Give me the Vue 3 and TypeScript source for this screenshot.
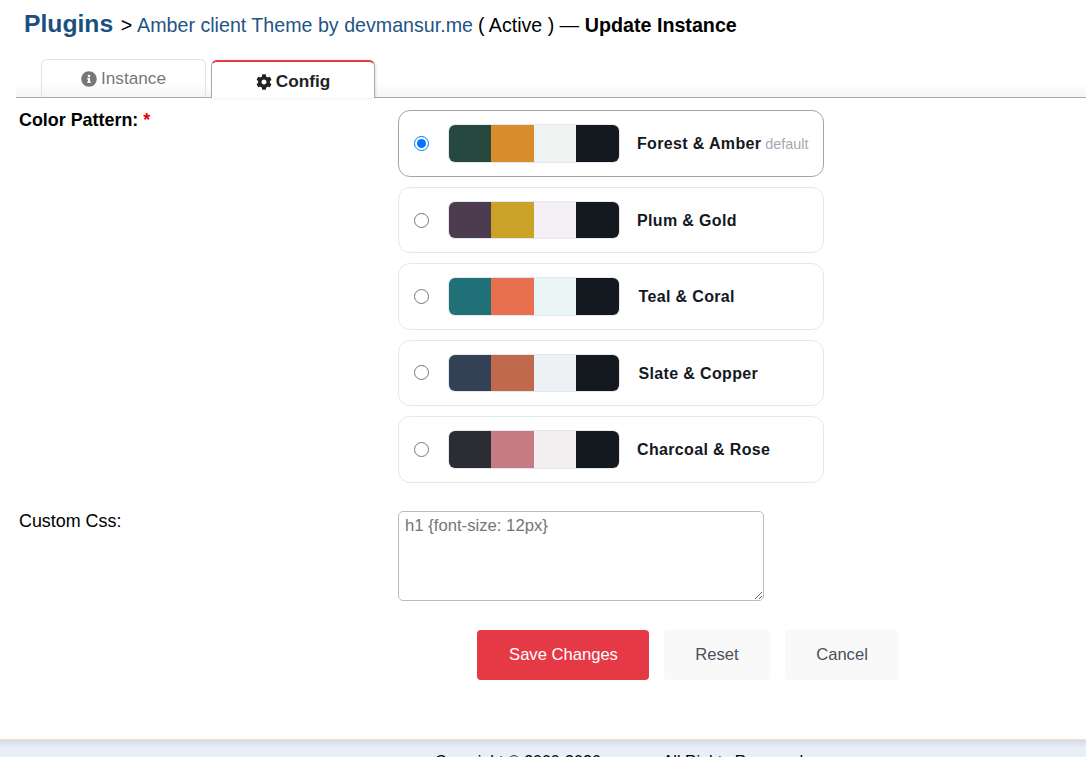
<script setup lang="ts">
interface Pattern {
  name: string
  colors: string[]
  isDefault?: boolean
  gap: number
}
const patterns: Pattern[] = [
  { name: 'Forest & Amber', colors: ['#26483e', '#d98c2b', '#eef3f1', '#14181f'], isDefault: true, gap: 17 },
  { name: 'Plum & Gold', colors: ['#4d3b50', '#c9a227', '#f3eff5', '#14181f'], gap: 17 },
  { name: 'Teal & Coral', colors: ['#1f7077', '#e8704f', '#e9f5f4', '#14181f'], gap: 18.5 },
  { name: 'Slate & Copper', colors: ['#334155', '#c0694c', '#eef1f4', '#14181f'], gap: 18.5 },
  { name: 'Charcoal & Rose', colors: ['#2c2c33', '#c67b84', '#f3eeef', '#14181f'], gap: 17 },
]
</script>

<template>
  <div class="page">
    <h1 class="title">
      <span class="plugins">Plugins</span>
      <span class="sep">&gt;</span>
      <span class="plugin-name">Amber client Theme by devmansur.me</span>
      <span class="state">( Active ) —</span>
      <strong class="action">Update Instance</strong>
    </h1>

    <div class="tabs">
      <a class="tab">
        <svg class="ico" viewBox="0 0 512 512"><path fill="currentColor" d="M256 8C119 8 8 119 8 256s111 248 248 248 248-111 248-248S393 8 256 8zm0 110c23 0 42 19 42 42s-19 42-42 42-42-19-42-42 19-42 42-42zm56 254c0 7-5 12-12 12h-88c-7 0-12-5-12-12v-24c0-7 5-12 12-12h12v-64h-12c-7 0-12-5-12-12v-24c0-7 5-12 12-12h64c7 0 12 5 12 12v100h12c7 0 12 5 12 12v24z"/></svg>
        Instance
      </a>
      <a class="tab active">
        <svg class="ico" viewBox="0 0 512 512"><path fill="currentColor" d="M487 316l-42-25c4-23 4-47 0-70l42-25c5-3 7-9 5-14-11-35-30-67-54-93-4-4-10-5-15-2l-42 25c-18-15-38-27-60-35V27c0-6-4-11-9-12-37-8-74-8-110 0-5 1-9 6-9 12v49c-22 8-42 20-60 35L91 86c-5-3-11-2-15 2-24 26-43 58-54 93-2 5 0 11 5 14l42 25c-4 23-4 47 0 70l-42 25c-5 3-7 9-5 14 11 35 30 67 54 93 4 4 10 5 15 2l42-25c18 15 38 27 60 35v49c0 6 4 11 9 12 37 8 74 8 110 0 5-1 9-6 9-12v-49c22-8 42-20 60-35l42 25c5 3 11 2 15-2 24-26 43-58 54-93 2-5 0-11-5-14zM256 336c-44 0-80-36-80-80s36-80 80-80 80 36 80 80-36 80-80 80z"/></svg>
        Config
      </a>
    </div>

    <form class="form" @submit.prevent>
      <div class="row">
        <label class="label strong">Color Pattern: <span class="req">*</span></label>
        <div class="options">
          <label v-for="(p, i) in patterns" :key="p.name" class="option" :class="{ selected: i === 0 }">
            <input type="radio" name="pattern" class="radio" :checked="i === 0" />
            <span class="swatch">
              <span v-for="c in p.colors" :key="c" class="chip" :style="{ background: c }"></span>
            </span>
            <span class="name" :style="{ marginLeft: p.gap + 'px' }">{{ p.name }}</span>
            <small v-if="p.isDefault" class="default">default</small>
          </label>
        </div>
      </div>

      <div class="row css-row">
        <label class="label">Custom Css:</label>
        <textarea class="css" placeholder="h1 {font-size: 12px}"></textarea>
      </div>

      <div class="actions">
        <button type="submit" class="btn save">Save Changes</button>
        <button type="button" class="btn reset">Reset</button>
        <button type="button" class="btn cancel">Cancel</button>
      </div>
    </form>

    <footer class="footer">Copyright © 2000-2026<span class="footer-gap"></span>All Rights Reserved</footer>
  </div>
</template>

<style>
html, body { margin: 0; padding: 0; background: #fff; overflow: hidden; }
</style>

<style scoped>
.page {
  height: 757px;
  overflow: hidden;
  font-family: "Liberation Sans", Arial, sans-serif;
  font-size: 17.9px;
  color: #000;
  display: flex;
  flex-direction: column;
  position: relative;
}
.title {
  margin: 0;
  padding: 9px 0 0 24px;
  height: 59px;
  box-sizing: border-box;
  font-weight: 400;
  display: flex;
  align-items: baseline;
  white-space: nowrap;
  line-height: 30px;
}
.plugins { font-size: 24.7px; font-weight: 700; color: #1a5080; }
.sep { margin-left: 7.5px; font-size: 19.6px; }
.plugin-name { margin-left: 5px; font-size: 19.65px; color: #1f5485; }
.state { margin-left: 5px; font-size: 19.6px; }
.action { margin-left: 5.5px; font-size: 19.7px; }
.tabs {
  margin-left: 16px;
  padding-left: 25px;
  height: 39px;
  display: flex;
  align-items: flex-end;
  gap: 5px;
  border-bottom: 1px solid #aaa;
  box-sizing: border-box;
  background: linear-gradient(#fff 65%, #f5f5f5);
}
.tab {
  box-sizing: border-box;
  width: 165px;
  height: 38px;
  display: flex;
  align-items: center;
  justify-content: center;
  gap: 4px;
  color: #777;
  font-size: 17.2px;
  background: linear-gradient(#fff 60%, #f5f5f5);
  border: 1px solid #e2e2e2;
  border-bottom: 0;
  border-radius: 6px 6px 0 0;
}
.tab.active {
  width: 164px;
  margin-bottom: -1px;
  padding-top: 3px;
  color: #222;
  font-weight: 700;
  background: #fff;
  border: 1px solid #aaa;
  border-top: 2px solid #e63946;
  border-bottom: 0;
  box-shadow: 1px 0 3px rgba(0,0,0,.12);
}
.ico { width: 16px; height: 16px; flex: none; }
.form { padding: 12px 0 0 16px; flex: 1; }
.row { display: grid; grid-template-columns: 382px 1fr; }
.label { padding-left: 3px; line-height: 20px; }
.strong { font-weight: 700; }
.req { color: #e00; }
.options { display: flex; flex-direction: column; gap: 10px; width: 426px; }
.option {
  box-sizing: border-box;
  height: 66.4px;
  display: flex;
  align-items: center;
  padding-left: 15px;
  border: 1px solid #e6e8ef;
  border-radius: 12px;
  background: #fff;
}
.option.selected { border-color: #a0a4b4; height: 67px; }
.radio { width: 15px; height: 15px; margin: 0 19px 0 0; accent-color: #0075ff; }
.swatch {
  display: grid;
  grid-template-columns: 42px 43px 42px 1fr;
  width: 172px;
  height: 38.4px;
  box-sizing: border-box;
  border: 1px solid #e6e8ef;
  border-radius: 7px;
  overflow: hidden;
  flex: none;
}
.name { font-size: 16px; font-weight: 700; color: #14181f; letter-spacing: .35px; padding-top: 1.2px; }
.default { margin-left: 4px; font-size: 14.4px; color: #a4a8b4; font-weight: 400; padding-top: 1.2px; }
.css-row { margin-top: 28px; }
.css {
  box-sizing: border-box;
  width: 366px;
  height: 90px;
  padding: 4px 6px;
  border: 1px solid #bbb;
  border-radius: 5px;
  font: 16.7px/19px "Liberation Sans", Arial, sans-serif;
  outline: none;
}
.css::placeholder { color: #757575; opacity: 1; }
.actions { display: flex; gap: 15px; margin-top: 29px; padding-left: 461px; }
.btn {
  height: 50px;
  border: 0;
  border-radius: 4px;
  font: 16.6px "Liberation Sans", Arial, sans-serif;
  padding: 0;
}
.save { width: 172px; padding-left: 1px; background: #e63946; color: #fff; }
.reset { width: 106px; background: #f9f9f9; color: #4a4f58; }
.cancel { width: 114px; background: #f9f9f9; color: #4a4f58; }
.footer {
  position: absolute;
  top: 739px;
  left: 0;
  right: 0;
  height: 60px;
  box-sizing: border-box;
  padding: 13px 0 0 435px;
  font-size: 16px;
  background: linear-gradient(#d5dbe3 0, #e9eff8 8px);
  border-top: 1px solid #f3dfcc;
  white-space: nowrap;
}
.footer-gap { display: inline-block; width: 62px; }
</style>
